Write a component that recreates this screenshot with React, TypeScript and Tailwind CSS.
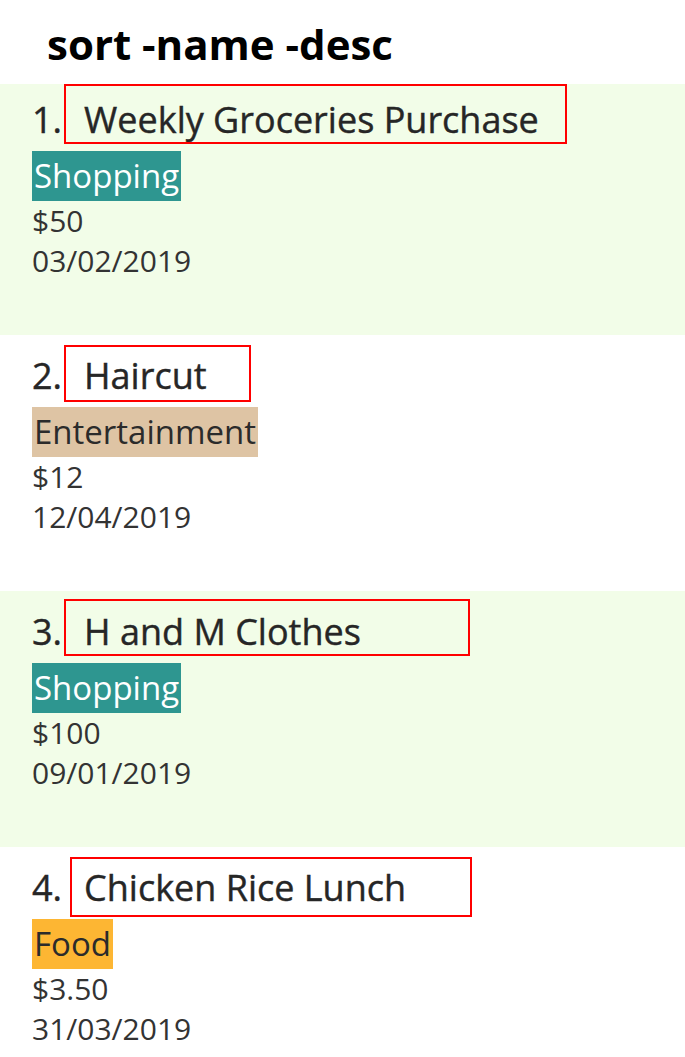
const expenses = [
  {
    no: 1,
    name: 'Weekly Groceries Purchase',
    tag: 'Shopping',
    tagClass: 'bg-[#2e9690] text-white',
    amount: '$50',
    date: '03/02/2019',
    rowClass: 'bg-[#f2fde8] h-[251px] pt-[13px]',
    boxClass: 'left-[64px] top-0 w-[503px] h-[60px]',
  },
  {
    no: 2,
    name: 'Haircut',
    tag: 'Entertainment',
    tagClass: 'bg-[#dec4a4] text-[#2b2b2b]',
    amount: '$12',
    date: '12/04/2019',
    rowClass: 'bg-white h-[256px] pt-[18px]',
    boxClass: 'left-[64px] top-[10px] w-[187px] h-[57px]',
  },
  {
    no: 3,
    name: 'H and M Clothes',
    tag: 'Shopping',
    tagClass: 'bg-[#2e9690] text-white',
    amount: '$100',
    date: '09/01/2019',
    rowClass: 'bg-[#f2fde8] h-[256px] pt-[18px]',
    boxClass: 'left-[64px] top-[8px] w-[406px] h-[57px]',
  },
  {
    no: 4,
    name: 'Chicken Rice Lunch',
    tag: 'Food',
    tagClass: 'bg-[#fdb633] text-[#2b2b2b]',
    amount: '$3.50',
    date: '31/03/2019',
    rowClass: 'bg-white h-[210px] pt-[18px]',
    boxClass: 'left-[70px] top-[10px] w-[402px] h-[60px]',
  },
];

const App = () => {
  return (
    <div className="w-[685px] h-[1057px] overflow-hidden bg-white font-['Open_Sans',sans-serif]">
      {/* Command header */}
      <div className="h-[84px] pl-[47px] pt-[18px]">
        <h1 className="text-[42px] leading-[52px] font-bold text-black">sort -name -desc</h1>
      </div>

      {/* Expense list */}
      {expenses.map(e => (
        <div key={e.no} className={`relative pl-[32px] text-[#333333] ${e.rowClass}`}>
          {/* annotation box */}
          <div className={`absolute border-2 border-[#ff0000] ${e.boxClass}`} />

          <div className="flex h-[44px] pt-[1px] text-[36px] leading-[44px] font-medium text-[#262626] [-webkit-text-stroke:0.4px_#262626]">
            <span>{e.no}.</span>
            <span className="ml-[22px]">{e.name}</span>
          </div>
          <div className="mt-[10px]">
            <span className={`inline-block h-[50px] px-[2px] text-[33px] leading-[50px] ${e.tagClass}`}>
              {e.tag}
            </span>
          </div>
          <p className="text-[30px] leading-[40px]">{e.amount}</p>
          <p className="text-[30px] leading-[40px]">{e.date}</p>
        </div>
      ))}
    </div>
  );
};

export default App;
